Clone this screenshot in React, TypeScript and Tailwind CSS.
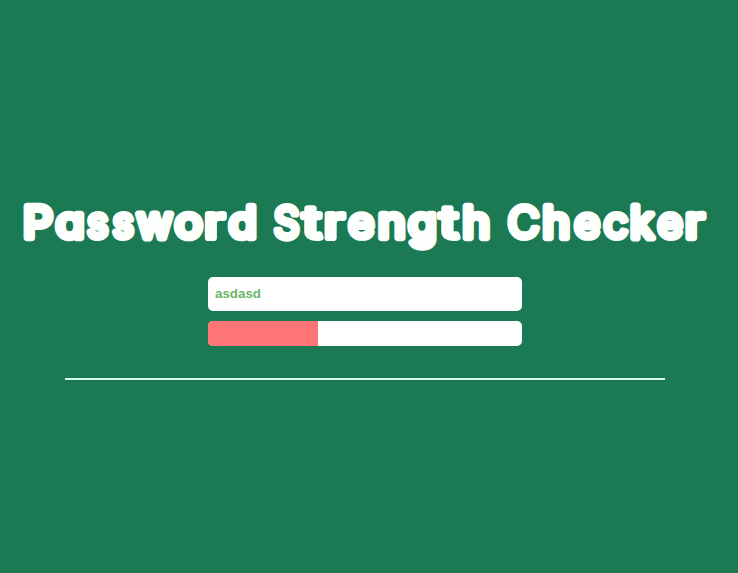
import { useState } from "react";

// Each letter of the heading: character, centre, horizontal scale.
type Letter = [string, number, number];

const title: Letter[] = [
  ["P", 37.8, 1.06], ["a", 70, 1.06], ["s", 97.8, 0.92], ["s", 123.3, 0.92], ["w", 154.5, 0.99],
  ["o", 188.5, 1.05], ["r", 214.5, 1.2], ["d", 242.7, 1.03],
  [" ", 264, 1],
  ["S", 286.5, 0.91], ["t", 312, 1.25], ["r", 334.2, 1.2], ["e", 361.3, 1.03], ["n", 391.7, 1.06],
  ["g", 422.5, 1.05], ["t", 449, 1.25], ["h", 476.2, 1.06],
  [" ", 498, 1],
  ["C", 523.5, 1], ["h", 556.2, 1.06], ["e", 587, 1.02], ["c", 615.7, 0.98], ["k", 641.8, 0.96],
  ["e", 670.2, 1], ["r", 694.5, 1.15],
];

export default function App() {
  const [password, setPassword] = useState("asdasd");
  return (
    <main className="flex h-[573px] w-[738px] flex-col items-center overflow-hidden bg-[#1b7953] pr-2 pt-[190px] font-['Liberation_Sans',Arial,sans-serif]">
      <h1 className="h-[87px] w-[730px] font-['Inter',sans-serif] text-[44px] font-normal">
        <svg width="730" height="75" viewBox="0 190 730 75" className="block overflow-visible">
          <g
            fill="#fdfffd"
            stroke="#fdfffd"
            strokeLinejoin="round"
            strokeLinecap="round"
            textAnchor="middle"
            className="[font-feature-settings:'cv11'_1]"
          >
            {title.map(([char, x, scale], i) => (
              <text
                key={i}
                transform={`translate(${x} 237.7) scale(${scale} 1)`}
                strokeWidth={"seSCc".includes(char) ? 5.8 : 6.8}
                vectorEffect="non-scaling-stroke"
              >
                {char}
              </text>
            ))}
          </g>
        </svg>
      </h1>
      <input
        aria-label="Password"
        value={password}
        onChange={(e) => setPassword(e.target.value)}
        className="h-[34px] w-[314px] rounded-[5px] bg-white px-[7px] pb-[2px] text-[13.333px] font-bold text-[#69b568] outline-none"
      />
      <div className="mt-[10px] h-[25px] w-[314px] overflow-hidden rounded-[5px] bg-white">
        <div className="h-full w-[110px] bg-[#ff7575]" />
      </div>
      <div className="mt-8 h-[2px] w-[600px] bg-[#d5ffed]" />
    </main>
  );
}
